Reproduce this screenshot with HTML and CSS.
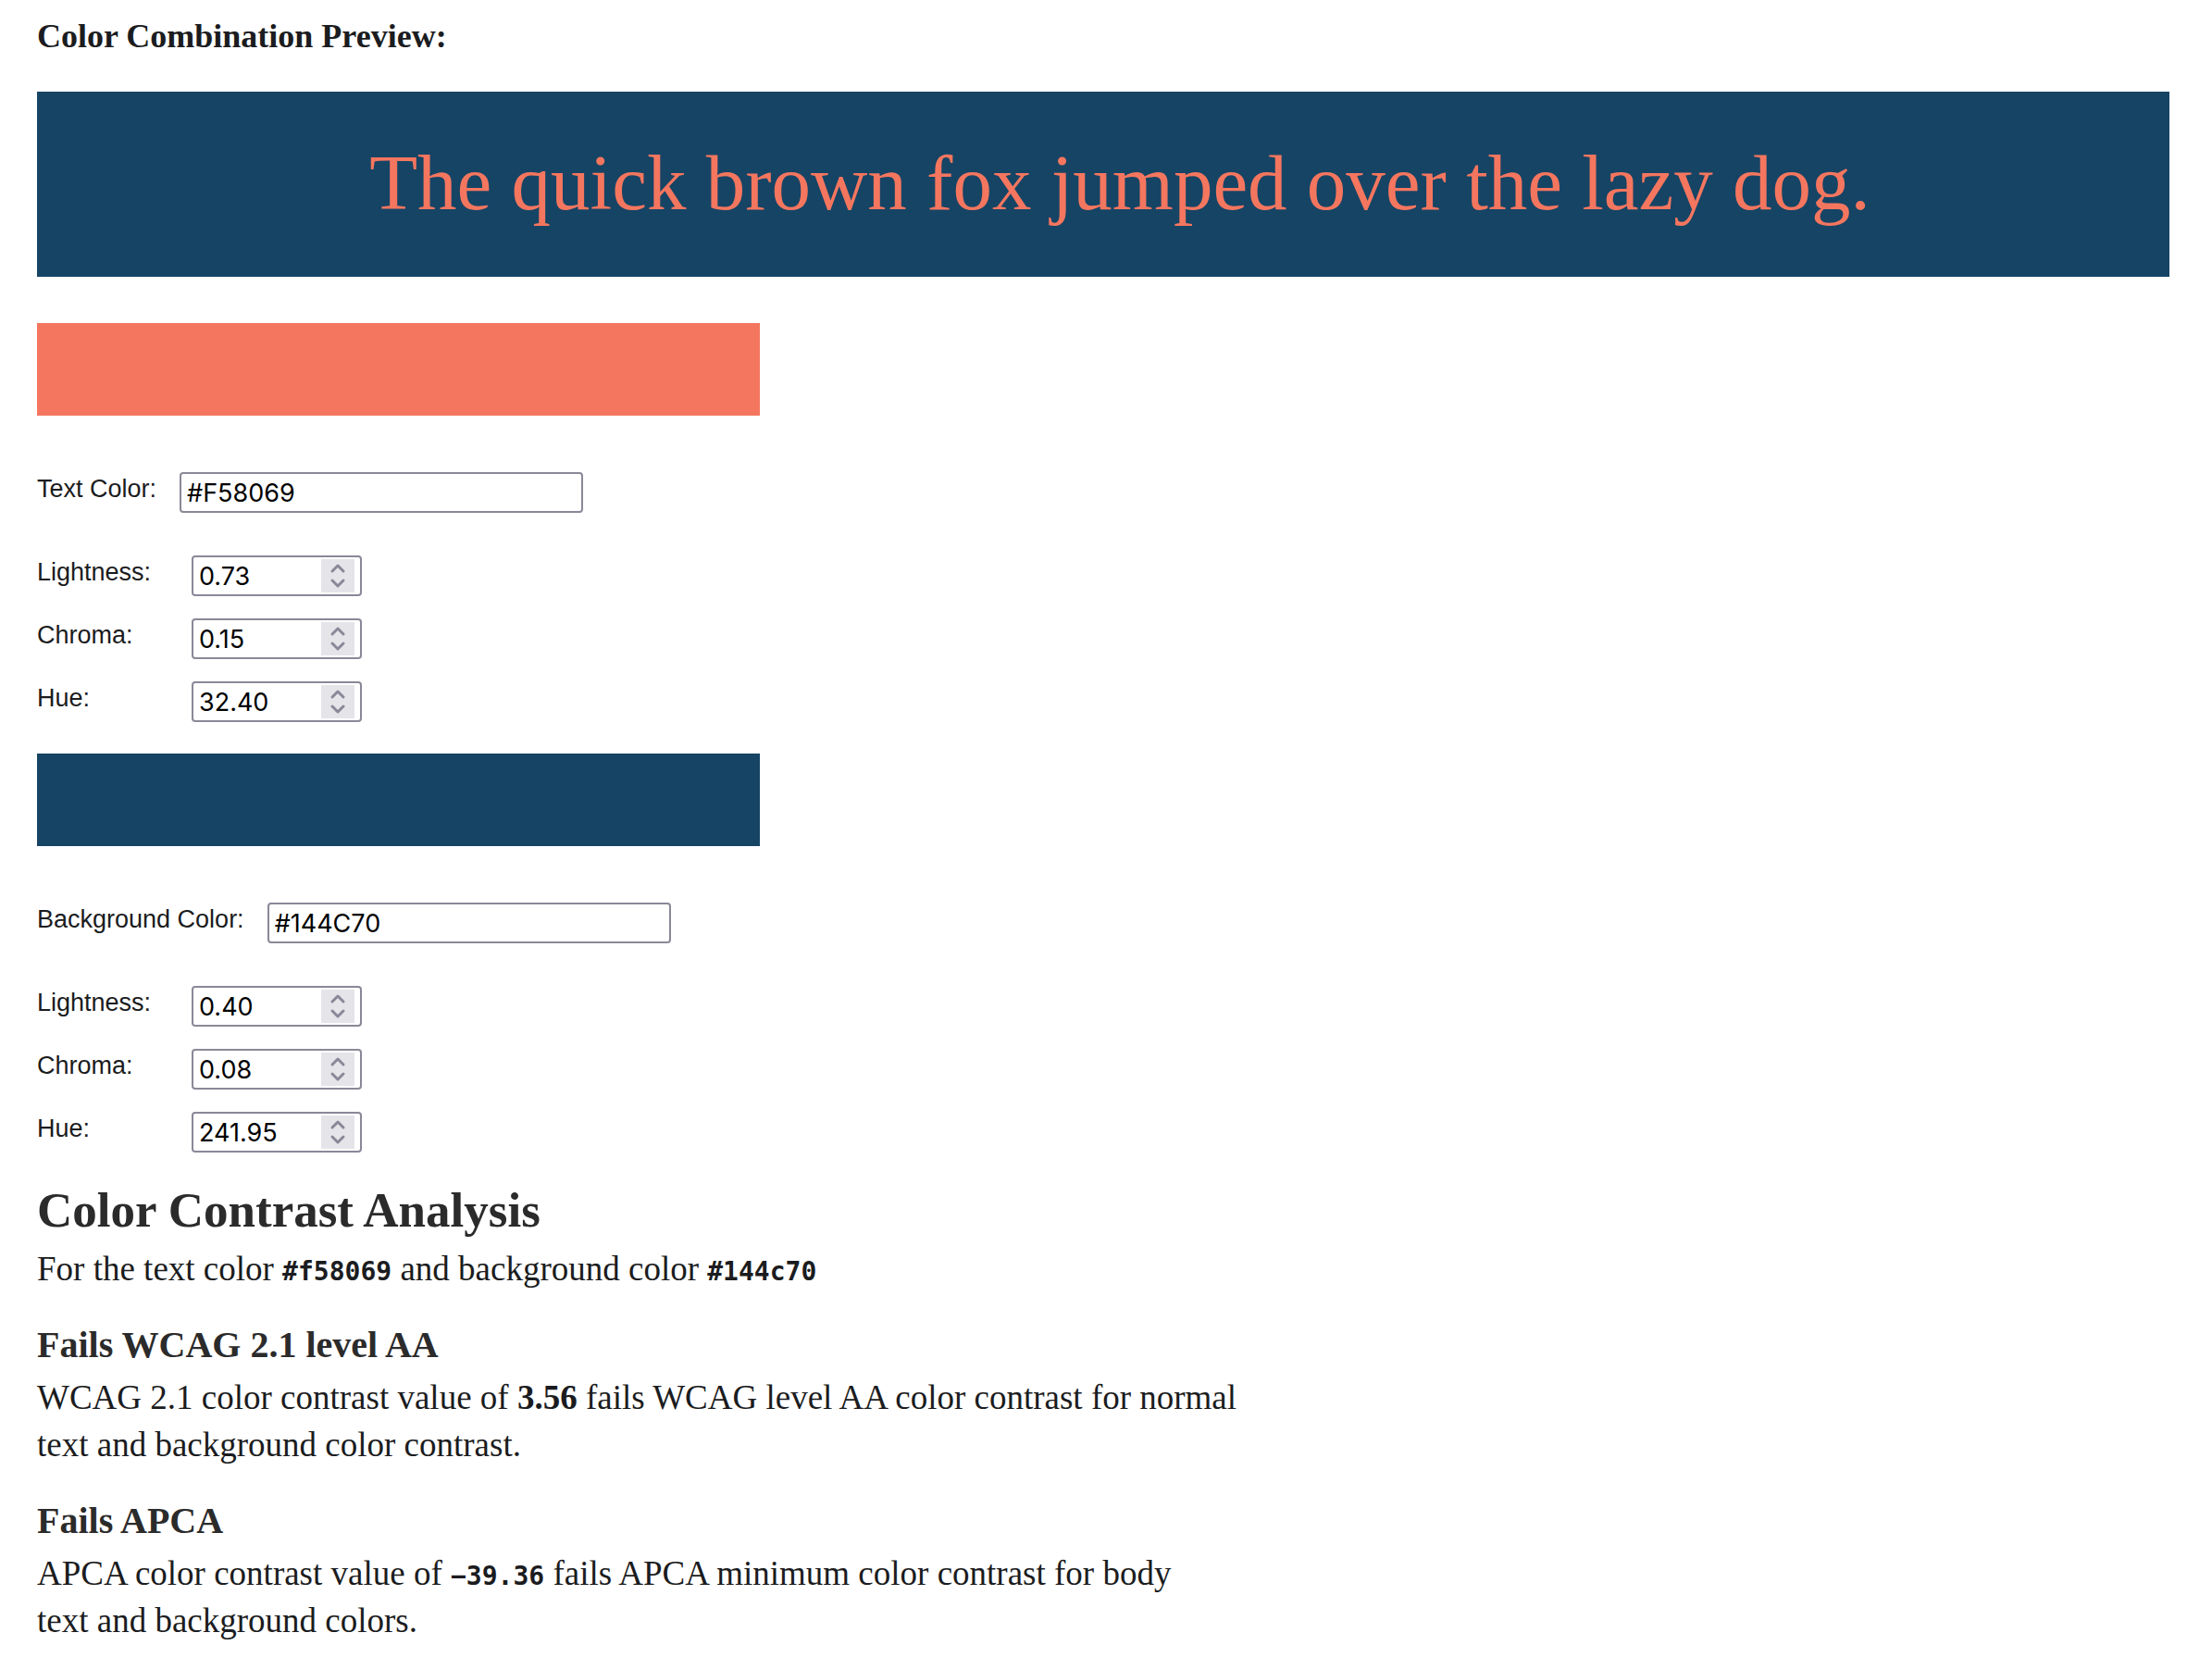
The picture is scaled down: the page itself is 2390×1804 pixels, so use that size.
FILE: index.html
```html
<!DOCTYPE html>
<html lang="en">
<head>
<meta charset="utf-8">
<meta name="viewport" content="width=device-width, initial-scale=1">
<title>Color Combination Preview</title>
<link rel="stylesheet" href="styles.css">
</head>
<body>
<svg class="symbols" aria-hidden="true">
  <symbol id="chevron-up" viewBox="0 0 36 18"><path d="M12 13l6-6 6 6"/></symbol>
  <symbol id="chevron-down" viewBox="0 0 36 18"><path d="M12 5l6 6 6-6"/></symbol>
</svg>
<main class="page">
  <h1 class="preview-title">Color Combination Preview:</h1>
  <p class="preview">The quick brown fox jumped over the lazy dog.</p>

  <form class="controls">
    <section class="color-group">
      <div class="swatch swatch-text"></div>
      <div class="field">
        <label for="text-color">Text Color:</label>
        <input class="hex" id="text-color" type="text" value="#F58069">
      </div>
      <div class="channels">
        <label for="text-l">Lightness:</label>
        <div class="number">
          <input id="text-l" type="number" step="0.01" value="0.73">
          <div class="stepper">
            <button type="button" aria-label="Increase lightness"><svg><use href="#chevron-up"/></svg></button>
            <button type="button" aria-label="Decrease lightness"><svg><use href="#chevron-down"/></svg></button>
          </div>
        </div>
        <label for="text-c">Chroma:</label>
        <div class="number">
          <input id="text-c" type="number" step="0.01" value="0.15">
          <div class="stepper">
            <button type="button" aria-label="Increase chroma"><svg><use href="#chevron-up"/></svg></button>
            <button type="button" aria-label="Decrease chroma"><svg><use href="#chevron-down"/></svg></button>
          </div>
        </div>
        <label for="text-h">Hue:</label>
        <div class="number">
          <input id="text-h" type="number" step="0.01" value="32.40">
          <div class="stepper">
            <button type="button" aria-label="Increase hue"><svg><use href="#chevron-up"/></svg></button>
            <button type="button" aria-label="Decrease hue"><svg><use href="#chevron-down"/></svg></button>
          </div>
        </div>
      </div>
    </section>

    <section class="color-group">
      <div class="swatch swatch-background"></div>
      <div class="field">
        <label for="bg-color">Background Color:</label>
        <input class="hex" id="bg-color" type="text" value="#144C70">
      </div>
      <div class="channels">
        <label for="bg-l">Lightness:</label>
        <div class="number">
          <input id="bg-l" type="number" step="0.01" value="0.40">
          <div class="stepper">
            <button type="button" aria-label="Increase lightness"><svg><use href="#chevron-up"/></svg></button>
            <button type="button" aria-label="Decrease lightness"><svg><use href="#chevron-down"/></svg></button>
          </div>
        </div>
        <label for="bg-c">Chroma:</label>
        <div class="number">
          <input id="bg-c" type="number" step="0.01" value="0.08">
          <div class="stepper">
            <button type="button" aria-label="Increase chroma"><svg><use href="#chevron-up"/></svg></button>
            <button type="button" aria-label="Decrease chroma"><svg><use href="#chevron-down"/></svg></button>
          </div>
        </div>
        <label for="bg-h">Hue:</label>
        <div class="number">
          <input id="bg-h" type="number" step="0.01" value="241.95">
          <div class="stepper">
            <button type="button" aria-label="Increase hue"><svg><use href="#chevron-up"/></svg></button>
            <button type="button" aria-label="Decrease hue"><svg><use href="#chevron-down"/></svg></button>
          </div>
        </div>
      </div>
    </section>
  </form>

  <section class="analysis">
    <h2>Color Contrast Analysis</h2>
    <p>For the text color <code>#f58069</code> and background color <code>#144c70</code></p>
    <h3>Fails WCAG 2.1 level AA</h3>
    <p>WCAG 2.1 color contrast value of <strong>3.56</strong> fails WCAG level AA color contrast for normal text and background color contrast.</p>
    <h3>Fails APCA</h3>
    <p>APCA color contrast value of <code>−39.36</code> fails APCA minimum color contrast for body<br>text and background colors.</p>
  </section>
</main>
</body>
</html>
```
FILE: styles.css
```css
:root {
  --text-color: #f4765f;
  --background-color: #164465;
  --border: #8a8898;
}

* {
  box-sizing: border-box;
}

body {
  margin: 0;
  background: #fff;
  color: #1b1c20;
  font: 37px/51px "Liberation Serif", "Times New Roman", serif;
}

h1,
h2,
h3,
p {
  margin: 0;
}

.symbols {
  display: none;
}

.page {
  padding: 14px 46px 16px 40px;
}

.preview-title {
  margin-bottom: 34px;
  font-size: 36px;
}

.preview {
  margin-bottom: 50px;
  padding: 50px 0 54px 36px;
  background: var(--background-color);
  color: var(--text-color);
  font-size: 85px;
  line-height: 96px;
  text-align: center;
}

.controls {
  display: flex;
  flex-direction: column;
  gap: 34px;
  font: 27px/36px "Liberation Sans", Arial, sans-serif;
}

.swatch {
  max-width: 781px;
  height: 100px;
  margin-bottom: 61px;
}

.swatch-text {
  background: var(--text-color);
}

.swatch-background {
  background: var(--background-color);
}

.field {
  display: flex;
  align-items: flex-start;
  gap: 25px;
  margin-bottom: 46px;
}

.hex,
.number {
  height: 44px;
  border: 2px solid var(--border);
  border-radius: 4px;
  background: #fff;
}

input {
  color: #000;
  font: 27px Inter, sans-serif;
}

.hex {
  width: 436px;
  padding: 0 6px;
}

.channels {
  display: grid;
  grid-template-columns: 167px 184px;
  row-gap: 24px;
}

.number {
  display: flex;
  padding: 2px 6px;
}

.number input {
  flex: 1;
  min-width: 0;
  padding: 0;
  border: 0;
  background: none;
  appearance: textfield;
}

.number input::-webkit-inner-spin-button {
  display: none;
}

.stepper {
  display: flex;
  flex-direction: column;
  width: 36px;
  background: #e5e4e9;
}

.stepper button {
  height: 18px;
  padding: 0;
  border: 0;
  background: none;
}

.stepper svg {
  display: block;
  width: 36px;
  height: 18px;
  fill: none;
  stroke: var(--border);
  stroke-width: 3;
  stroke-linecap: round;
  stroke-linejoin: round;
}

.analysis {
  max-width: 1320px;
  margin-top: 30px;
}

.analysis h2 {
  margin-bottom: 6px;
  color: #2b2b2b;
  font-size: 53px;
  line-height: 64px;
}

.analysis h3 {
  margin: 31px 0 6px;
  color: #2b2b2b;
  font-size: 40px;
}

code {
  font: bold 28px/36px "DejaVu Sans Mono", monospace;
}
```
